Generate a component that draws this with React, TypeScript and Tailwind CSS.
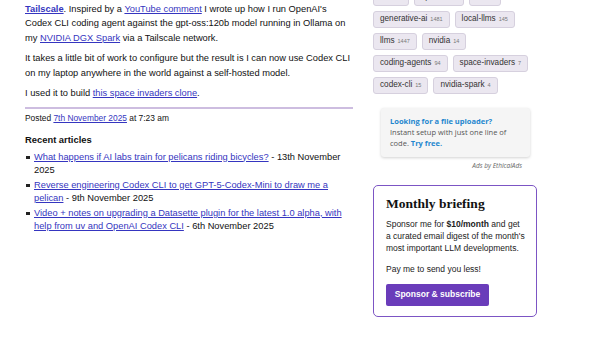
import React from "react";

const linkCls = "text-[#3535c0] underline decoration-[#3535c0] underline-offset-[1px]";

const tagRows: [string, number][][] = [
  [
    ["ai", 1686],
    ["openai", 366],
    ["uv", 70],
  ],
  [
    ["generative-ai", 1481],
    ["local-llms", 145],
  ],
  [
    ["llms", 1447],
    ["nvidia", 14],
  ],
  [
    ["coding-agents", 94],
    ["space-invaders", 7],
  ],
  [
    ["codex-cli", 15],
    ["nvidia-spark", 4],
  ],
];

const recent = [
  {
    title: "What happens if AI labs train for pelicans riding bicycles?",
    date: "13th November 2025",
  },
  {
    title: "Reverse engineering Codex CLI to get GPT-5-Codex-Mini to draw me a pelican",
    date: "9th November 2025",
  },
  {
    title:
      "Video + notes on upgrading a Datasette plugin for the latest 1.0 alpha, with help from uv and OpenAI Codex CLI",
    date: "6th November 2025",
  },
];

function Tag({ name, count }: { name: string; count: number }) {
  return (
    <span className="inline-flex h-[17px] items-center gap-[3px] rounded-[3px] border border-[#d6d0de] bg-[#ebe7f0] px-[6px] text-[8.2px] text-[#333]">
      {name}
      <span className="text-[5.5px] text-[#777]">{count}</span>
    </span>
  );
}

export default function App() {
  return (
    <div className="h-[338px] w-[600px] overflow-hidden bg-white font-['Liberation_Sans',Arial,sans-serif] text-[#111]">
      <div className="flex">
        {/* main column */}
        <div className="-mt-[13px] ml-[25px] w-[328px] text-[9.3px] leading-[14.5px]">
          <p>
            <a className="text-transparent underline decoration-[#2a2aa0] decoration-[1.5px]">
              Running OpenAI&apos;s gpt-oss and Codex CLI via Ollama and a
            </a>
            <br />
            <a className={linkCls + " font-bold"}>Tailscale</a>. Inspired by a{" "}
            <a className={linkCls}>YouTube comment</a> I wrote up how I run OpenAI&apos;s Codex CLI
            coding agent against the gpt-oss:120b model running in Ollama on my{" "}
            <a className={linkCls}>NVIDIA DGX Spark</a> via a Tailscale network.
          </p>
          <p className="mt-[6px]">
            It takes a little bit of work to configure but the result is I can now use Codex CLI on my
            laptop anywhere in the world against a self-hosted model.
          </p>
          <p className="mt-[6px]">
            I used it to build <a className={linkCls}>this space invaders clone</a>.
          </p>
          <div className="mt-[6px] h-[2px] bg-[#cdbde0]" />
          <p className="mt-[2px] text-[8.4px] leading-[14px]">
            Posted <a className={linkCls}>7th November 2025</a> at 7:23 am
          </p>
          <h3 className="mt-[8px] text-[9.4px] font-bold leading-[14px]">Recent articles</h3>
          <ul className="mt-[4px] flex flex-col gap-[1px] pl-[9px]">
            {recent.map((r) => (
              <li key={r.title} className="relative leading-[13.5px]">
                <span className="absolute -left-[8px] top-[5px] h-[3.5px] w-[3.5px] bg-[#222]" />
                <a className={linkCls}>{r.title}</a> - {r.date}
              </li>
            ))}
          </ul>
        </div>

        {/* sidebar */}
        <div className="ml-[20px] flex w-[165px] flex-col">
          <div className="-mt-[11px] flex flex-col gap-[5px]">
            {tagRows.map((row, i) => (
              <div key={i} className="flex gap-[5px]">
                {row.map(([n, c]) => (
                  <Tag key={n} name={n} count={c} />
                ))}
              </div>
            ))}
          </div>

          <div className="ml-[8px] mt-[14px] w-[149px] rounded-[3px] bg-[#f5f5f5] px-[9px] py-[8px] font-['Open_Sans',sans-serif] text-[7.5px] leading-[11px] text-[#555] shadow-[0_1px_3px_rgba(0,0,0,0.18)]">
            <div className="font-bold text-[#1f87cf]">Looking for a file uploader?</div>
            <div>
              Instant setup with just one line of code.{" "}
              <span className="font-bold text-[#1f87cf]">Try free.</span>
            </div>
          </div>
          <div className="mr-[16px] mt-[4px] text-right font-['Open_Sans',sans-serif] text-[6.5px] italic text-[#666]">
            Ads by EthicalAds
          </div>

          <div className="mt-[14px] h-[132px] w-[164px] rounded-[5px] border-[1.5px] border-[#7c55c4] pl-[12px] pr-[10px] pt-[10px]">
            <h2 className="font-['Liberation_Serif',serif] text-[13.5px] font-bold leading-[16px] text-[#111]">
              Monthly briefing
            </h2>
            <p className="mt-[6px] text-[8.5px] leading-[12px] text-[#222]">
              Sponsor me for <b>$10/month</b> and get a curated email digest of the month&apos;s most
              important LLM developments.
            </p>
            <p className="mt-[9px] text-[8.5px] leading-[12px] text-[#222]">Pay me to send you less!</p>
            <div className="mt-[9px] inline-flex h-[22px] w-[103px] items-center justify-center rounded-[2px] bg-[#6a3cba] text-[8.5px] font-bold text-white">
              Sponsor &amp; subscribe
            </div>
          </div>
        </div>
      </div>
    </div>
  );
}
